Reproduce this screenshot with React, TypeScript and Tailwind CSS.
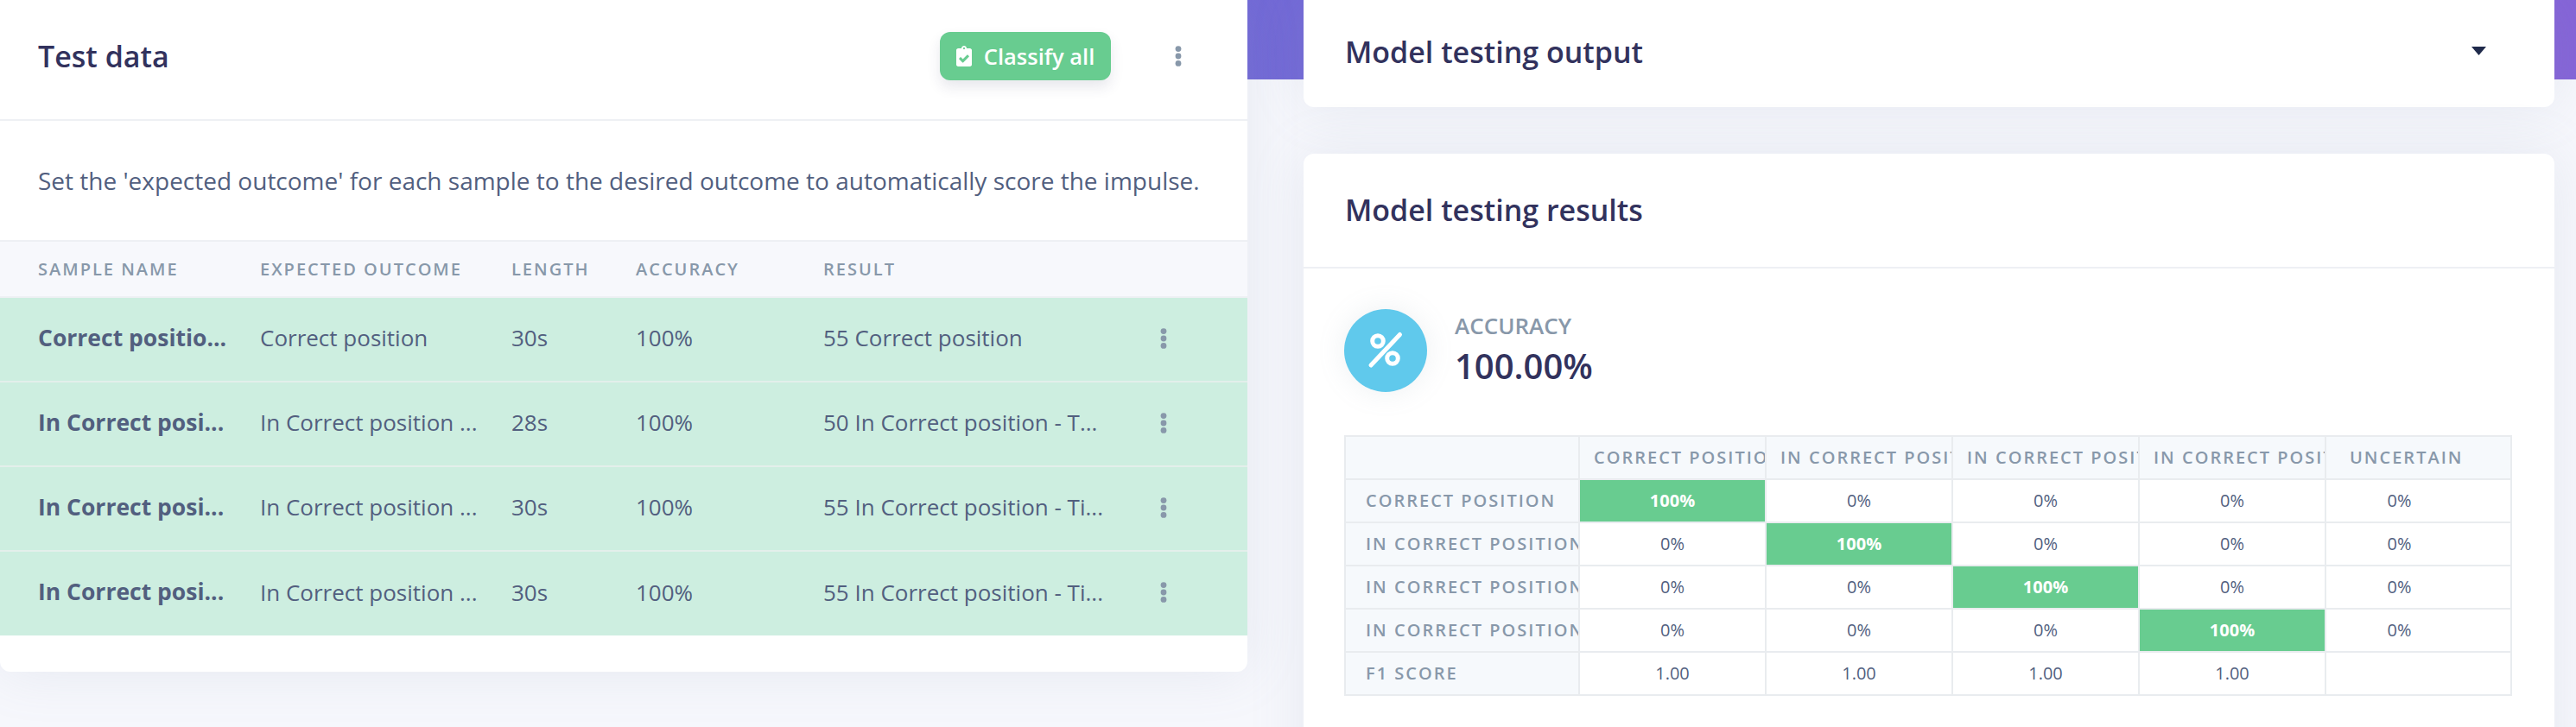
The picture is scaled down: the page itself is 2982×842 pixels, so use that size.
import { FaClipboardCheck } from 'react-icons/fa'

const samples = [
  { name: 'Correct positio...', expected: 'Correct position', length: '30s', result: '55 Correct position' },
  { name: 'In Correct posi...', expected: 'In Correct position ...', length: '28s', result: '50 In Correct position - T...' },
  { name: 'In Correct posi...', expected: 'In Correct position ...', length: '30s', result: '55 In Correct position - Ti...' },
  { name: 'In Correct posi...', expected: 'In Correct position ...', length: '30s', result: '55 In Correct position - Ti...' },
]

const labels = ['Correct position', 'In Correct position - Time out', 'In Correct position - Tilted', 'In Correct position - Tipped']

function Dots({ className }: { className?: string }) {
  return (
    <svg viewBox="0 0 8 24" className={className} fill="#8898aa">
      <circle cx="4" cy="3.6" r="3.4" />
      <circle cx="4" cy="12" r="3.4" />
      <circle cx="4" cy="20.4" r="3.4" />
    </svg>
  )
}

export default function App() {
  return (
    <div className="relative h-[842px] overflow-hidden bg-[#f6f7fc] font-['Open_Sans',sans-serif] text-[#525f7f]">
      {/* Purple band behind the cards */}
      <div className="absolute inset-x-0 top-0 h-[92px] bg-gradient-to-r from-[#5e6ed6] to-[#8564d8]"></div>

      <div className="relative flex items-start">
        {/* Test data */}
        <div className="w-[1444px] h-[778px] shrink-0 bg-white rounded-b-xl shadow-[0_0_64px_rgba(136,152,170,0.14)]">
          <div className="h-[140px] pb-[8px] flex items-center border-b-2 border-[#eef0f4] pl-[44px]">
            <h3 className="text-[34px] font-semibold text-[#32325d]">Test data</h3>
            <button className="ml-auto h-[56px] w-[198px] flex items-center justify-center gap-[14px] rounded-xl bg-[#68cc90] text-white text-[25.5px] font-semibold shadow-[0_8px_16px_rgba(50,50,93,0.11)]">
              <FaClipboardCheck className="w-[18px] h-[24px]" />
              Classify all
            </button>
            <Dots className="ml-[74px] mr-[76px] w-[8px] h-[24px]" />
          </div>
          <p className="h-[138px] flex items-center pl-[44px] text-[28px]">
            Set the 'expected outcome' for each sample to the desired outcome to automatically score the impulse.
          </p>
          <table className="w-full table-fixed border-collapse">
            <thead>
              <tr className="h-[65px] bg-[#f7f8fc] border-y-2 border-[#eef0f4] text-left text-[20px] font-semibold uppercase tracking-[2px] text-[#8898aa]">
                <th className="w-[301px] pl-[44px] font-semibold">Sample name</th>
                <th className="w-[291px] font-semibold">Expected outcome</th>
                <th className="w-[144px] font-semibold">Length</th>
                <th className="w-[217px] font-semibold">Accuracy</th>
                <th className="w-[347px] font-semibold">Result</th>
                <th></th>
              </tr>
            </thead>
            <tbody>
              {samples.map((s, i) => (
                <tr key={i} className="h-[98px] bg-[#cdeee0] border-t-2 border-[#e3efeb] first:border-t-0 text-[26px]">
                  <td className="pl-[44px] pb-[3px] whitespace-nowrap text-[26.5px] font-bold">{s.name}</td>
                  <td className="pb-[3px] whitespace-nowrap">{s.expected}</td>
                  <td className="pb-[3px]">{s.length}</td>
                  <td className="pb-[3px]">100%</td>
                  <td className="pb-[3px] whitespace-nowrap">{s.result}</td>
                  <td className="pb-[3px]">
                    <Dots className="ml-[43px] w-[8px] h-[24px]" />
                  </td>
                </tr>
              ))}
            </tbody>
          </table>
        </div>

        {/* Right column */}
        <div className="ml-[65px] w-[1448px] shrink-0">
          <div className="h-[124px] pb-[4px] flex items-center justify-between bg-white rounded-b-xl px-[48px] shadow-[0_0_64px_rgba(136,152,170,0.14)]">
            <h3 className="text-[34px] font-semibold text-[#32325d]">Model testing output</h3>
            <svg viewBox="0 0 17 10" className="mr-[31px] mb-[2px] w-[17px] h-[10px]" fill="#1f2a4b">
              <path d="M0 0h17L8.5 10z" />
            </svg>
          </div>
          <div className="mt-[54px] h-[800px] bg-white rounded-t-xl shadow-[0_0_64px_rgba(136,152,170,0.14)]">
            <div className="h-[133px] flex items-center border-b-2 border-[#eef0f4] px-[48px]">
              <h3 className="text-[34px] font-semibold text-[#32325d]">Model testing results</h3>
            </div>
            <div className="pt-[47px] px-[47px]">
              <div className="flex items-center">
                <div className="w-[96px] h-[96px] rounded-full bg-[#60c9ec] flex items-center justify-center shadow-[0_0_32px_rgba(136,152,170,0.15)]">
                  <svg viewBox="0 0 48 48" className="w-[48px] h-[48px]" fill="none" stroke="#ffffff" strokeWidth="5" strokeLinecap="round">
                    <path d="M40.5 5.5 7 41" />
                    <circle cx="15" cy="13" r="6.3" />
                    <circle cx="32" cy="33" r="6.3" />
                  </svg>
                </div>
                <div className="ml-[32px]">
                  <div className="text-[26px] font-semibold uppercase text-[#8898aa] leading-[34px]">Accuracy</div>
                  <div className="mt-[2px] text-[40px] font-semibold text-[#32325d] leading-[56px]">100.00%</div>
                </div>
              </div>
              <table className="mt-[50px] w-[1352px] table-fixed border-collapse text-[20px] text-center">
                <thead>
                  <tr className="h-[50px] bg-[#f6f9fc] text-left font-semibold uppercase tracking-[2px] text-[#8898aa]">
                    <th className="w-[271px] border-2 border-[#e9ecef]"></th>
                    {labels.map((l, i) => (
                      <th key={i} className="w-[216px] border-2 border-[#e9ecef] pl-[16px] whitespace-nowrap overflow-hidden font-semibold">{l}</th>
                    ))}
                    <th className="border-2 border-[#e9ecef] pl-[27px] font-semibold">Uncertain</th>
                  </tr>
                </thead>
                <tbody>
                  {labels.map((l, r) => (
                    <tr key={r} className="h-[50px]">
                      <th className="border-2 border-[#e9ecef] bg-[#f6f9fc] pl-[23px] text-left font-semibold uppercase tracking-[2px] text-[#8898aa] whitespace-nowrap overflow-hidden">{l}</th>
                      {labels.map((_, c) =>
                        c === r ? (
                          <td key={c} className="border-2 border-[#e9ecef] bg-[#68cc90] font-bold text-white">100%</td>
                        ) : (
                          <td key={c} className="border-2 border-[#e9ecef]">0%</td>
                        )
                      )}
                      <td className="border-2 border-[#e9ecef] pr-[44px]">0%</td>
                    </tr>
                  ))}
                  <tr className="h-[50px]">
                    <th className="border-2 border-[#e9ecef] bg-[#f6f9fc] pl-[23px] text-left font-semibold uppercase tracking-[2px] text-[#8898aa]">F1 Score</th>
                    {labels.map((_, c) => (
                      <td key={c} className="border-2 border-[#e9ecef]">1.00</td>
                    ))}
                    <td className="border-2 border-[#e9ecef]"></td>
                  </tr>
                </tbody>
              </table>
            </div>
          </div>
        </div>
      </div>
    </div>
  )
}
